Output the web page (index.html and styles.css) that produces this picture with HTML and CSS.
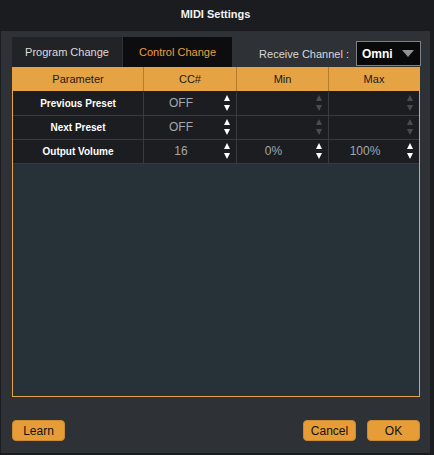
FILE: index.html
```html
<!DOCTYPE html>
<html lang="en">
<head>
  <meta charset="UTF-8" />
  <title>MIDI Settings</title>
  <link rel="stylesheet" href="styles.css">
</head>
<body>
  <div class="window">
    <div class="titlebar">MIDI Settings</div>

    <div class="toolbar">
      <div class="tabs">
        <div class="tab">Program Change</div>
        <div class="tab active">Control Change</div>
      </div>
      <div class="channel">
        <span class="channel-label">Receive Channel :</span>
        <div class="select">
          <span>Omni</span>
          <span class="caret"></span>
        </div>
      </div>
    </div>

    <div class="panel">
      <div class="grid head">
        <div class="cell">Parameter</div>
        <div class="cell">CC#</div>
        <div class="cell">Min</div>
        <div class="cell">Max</div>
      </div>

      <div class="grid row">
        <div class="cell name">Previous Preset</div>
        <div class="cell value">OFF<span class="spin"><i class="up"></i><i class="down"></i></span></div>
        <div class="cell value"><span class="spin off"><i class="up"></i><i class="down"></i></span></div>
        <div class="cell value"><span class="spin off"><i class="up"></i><i class="down"></i></span></div>
      </div>

      <div class="grid row">
        <div class="cell name">Next Preset</div>
        <div class="cell value">OFF<span class="spin"><i class="up"></i><i class="down"></i></span></div>
        <div class="cell value"><span class="spin off"><i class="up"></i><i class="down"></i></span></div>
        <div class="cell value"><span class="spin off"><i class="up"></i><i class="down"></i></span></div>
      </div>

      <div class="grid row">
        <div class="cell name">Output Volume</div>
        <div class="cell value">16<span class="spin"><i class="up"></i><i class="down"></i></span></div>
        <div class="cell value">0%<span class="spin"><i class="up"></i><i class="down"></i></span></div>
        <div class="cell value">100%<span class="spin"><i class="up"></i><i class="down"></i></span></div>
      </div>
    </div>

    <div class="footer">
      <button class="btn">Learn</button>
      <div class="right">
        <button class="btn">Cancel</button>
        <button class="btn">OK</button>
      </div>
    </div>
  </div>
</body>
</html>
```

FILE: styles.css
```css
body {
  margin: 0;
  background: #1b1c1f;
  font-family: "Liberation Sans", Arial, sans-serif;
  font-size: 12px;
}
.window {
  margin-left: 1px;
  width: 429px;
  height: 453px;
  background: #2e3135;
  display: flex;
  flex-direction: column;
}
.titlebar {
  height: 31px;
  line-height: 29px;
  background: #1b1c20;
  color: #f2f2f2;
  text-align: center;
  font-weight: bold;
  font-size: 11px;
}
.toolbar {
  display: flex;
  justify-content: space-between;
  align-items: flex-end;
  padding: 6px 9px 0 11px;
  height: 30px;
}
.tabs {
  display: flex;
  gap: 1px;
}
.tab {
  height: 30px;
  line-height: 30px;
  background: #222327;
  color: #dcdcdc;
  text-align: center;
  width: 110px;
  font-size: 11px;
}
.tab.active {
  width: 109px;
  background: #0d0d0f;
  color: #e8a03a;
}
.channel {
  display: flex;
  align-items: center;
  gap: 7px;
  align-self: flex-start;
  margin-top: 4px;
}
.channel-label {
  color: #d8d8d8;
  font-size: 11px;
}
.select {
  height: 23px;
  border: 1px solid #7d8286;
  background: #09090a;
  color: #ffffff;
  font-weight: bold;
  display: flex;
  align-items: center;
  justify-content: space-between;
  padding: 0 6px 0 5px;
  width: 52px;
}
.caret {
  width: 0;
  height: 0;
  border-left: 6px solid transparent;
  border-right: 6px solid transparent;
  border-top: 7px solid #8f9396;
}
.panel {
  margin: 0 10px 0 11px;
  height: 329px;
  border: 1px solid #e5a344;
  border-top: none;
  background: #263238;
}
.grid {
  display: grid;
  grid-template-columns: 130px 93px 92px 1fr;
}
.head {
  height: 24px;
  background: #e5a344;
  border-bottom: 1px solid #1c1d21;
}
.head .cell {
  line-height: 24px;
  text-align: center;
  color: #1a1a1a;
  font-size: 11px;
  border-left: 1px solid #b57c2e;
}
.head .cell:first-child {
  border-left: none;
}
.row {
  height: 23px;
  background: #1c1d21;
  border-bottom: 1px solid #393a3e;
}
.row .cell {
  position: relative;
  line-height: 23px;
  text-align: center;
  border-left: 1px solid #393a3e;
}
.row .cell:first-child {
  border-left: none;
}
.name {
  color: #ffffff;
  font-weight: bold;
  font-size: 10px;
}
.value {
  color: #a3a7ab;
  padding-right: 18px;
}
.spin {
  position: absolute;
  right: 6px;
  top: 3px;
  display: flex;
  flex-direction: column;
  gap: 4px;
}
.spin i {
  display: block;
  width: 0;
  height: 0;
  border-left: 3.5px solid transparent;
  border-right: 3.5px solid transparent;
}
.spin .up {
  border-bottom: 6px solid #ffffff;
}
.spin .down {
  border-top: 6px solid #ffffff;
}
.spin.off .up {
  border-bottom-color: #4a4c50;
}
.spin.off .down {
  border-top-color: #4a4c50;
}
.footer {
  display: flex;
  justify-content: space-between;
  padding: 23px 10px 0 11px;
}
.right {
  display: flex;
  gap: 11px;
}
.btn {
  width: 53px;
  height: 21px;
  padding: 0;
  border: 1px solid #c98a30;
  border-radius: 4px;
  background: #e69d38;
  color: #111111;
  font-family: "Liberation Sans", Arial, sans-serif;
  font-size: 12px;
}
```
